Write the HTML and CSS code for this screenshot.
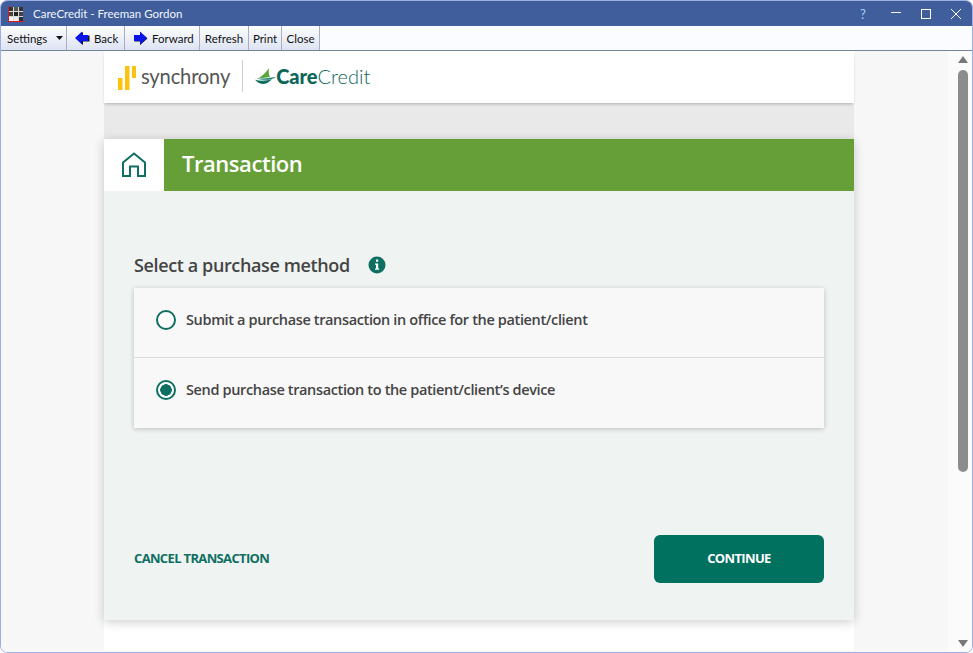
FILE: index.html
```html
<!DOCTYPE html>
<html lang="en">
<head>
<meta charset="utf-8">
<title>CareCredit - Freeman Gordon</title>
<link rel="stylesheet" href="styles.css">
</head>
<body>
<div class="window">
  <header class="titlebar">
    <svg class="app-icon" width="16" height="16" viewBox="0 0 16 16">
      <rect x="1" y="1" width="14" height="14" fill="#d8d8d8"/>
      <rect x="1" y="1" width="4" height="4" fill="#333"/><rect x="6" y="1" width="4" height="4" fill="#555"/><rect x="11" y="1" width="4" height="4" fill="#333"/>
      <rect x="1" y="6" width="4" height="4" fill="#444"/><rect x="6" y="6" width="4" height="4" fill="#222"/><rect x="11" y="6" width="4" height="4" fill="#444"/>
      <rect x="1" y="11" width="4" height="4" fill="#f4f4f4"/><rect x="6" y="11" width="4" height="4" fill="#eee"/><rect x="11" y="11" width="4" height="4" fill="#333"/>
      <path d="M0.5 0v15.5H16" fill="none" stroke="#e8141c" stroke-width="1"/>
    </svg>
    <span class="title-text">CareCredit - Freeman Gordon</span>
    <div class="win-controls">
      <span class="win-help">?</span>
      <svg class="win-btn" width="10" height="10" viewBox="0 0 10 10"><path d="M0 3.500h10" stroke="#fff" fill="none"/></svg>
      <svg class="win-btn" width="10" height="10" viewBox="0 0 10 10"><rect x=".5" y=".5" width="9" height="9" stroke="#fff" fill="none"/></svg>
      <svg class="win-btn" width="10" height="10" viewBox="0 0 10 10"><path d="M0 0l10 10M10 0L0 10" stroke="#fff" fill="none"/></svg>
    </div>
  </header>
  <nav class="toolbar">
    <div class="tool tool-settings">Settings<svg class="caret" width="7" height="4" viewBox="0 0 7 4"><path d="M0 0h7L3.500 4z" fill="#111"/></svg></div>
    <div class="tool tool-icon tool-back">
      <svg width="15" height="15" viewBox="0 0 15 15"><path d="M8 1v3.500h6.500v6H8V14L1 7.500z" fill="#111"/><path d="M7 0.500v3.500h6v6H7v3.500L0 7z" fill="#0a14e8"/></svg>
      Back
    </div>
    <div class="tool tool-icon tool-forward">
      <svg width="15" height="15" viewBox="0 0 15 15"><path d="M7 1v3.500H1.500v6H7V14l7.500-6.500z" fill="#111"/><path d="M7 0.500v3.500H1v6h6v3.500L14 7z" fill="#0a14e8"/></svg>
      Forward
    </div>
    <div class="tool tool-plain tool-refresh">Refresh</div>
    <div class="tool tool-plain tool-print">Print</div>
    <div class="tool tool-plain tool-close">Close</div>
  </nav>
  <div class="viewport">
    <main class="page">
      <div class="column">
        <div class="brand">
          <svg class="syf-mark" width="18" height="24" viewBox="0 0 18 24"><path d="M0 12h4.500v12H0zM7 0h4.500v24H7zM14 0h4v12h-4z" fill="#fdc20f"/></svg>
          <span class="syf-name">synchrony</span>
          <span class="brand-divider"></span>
          <svg class="cc-mark" width="21" height="16" viewBox="0 0 21 16">
            <path d="M14 0C12 3.500 8 7 4 10c4 0 8-.5 11-1C13.500 6.500 13.500 3 14 0z" fill="#5aa63a"/>
            <path d="M1 10.200c6 .8 13 0 20-1.200-4 3-12 4-20 1.200z" fill="#12806c"/>
            <path d="M0 11.800c6 1.500 12 1 17-.8-2.500 3-6 5-9.500 5C4.500 16 2 14 0 11.800z" fill="#0a6d5e"/>
          </svg>
          <span class="cc-name"><b>Care</b>Credit</span>
        </div>
        <div class="band"></div>
        <section class="card">
          <div class="card-head">
            <div class="home-tab">
              <svg width="26" height="26" viewBox="0 0 26 26"><path d="M2 24V10.500L13 1.500l11 9V24h-7V14.500H9V24z" fill="none" stroke="#0f6f62" stroke-width="2"/></svg>
            </div>
            <h1 class="card-title">Transaction</h1>
          </div>
          <div class="card-body">
            <div class="method-head">
              <h2 class="method-title">Select a purchase method</h2>
              <svg class="info" width="18" height="18" viewBox="0 0 18 18"><circle cx="9" cy="9" r="8.500" fill="#0f6f62"/><path d="M8 3.500h2.200v2.200H8zM7 7.500h3.200v5h1v1.300H7v-1.300h1V8.800H7z" fill="#fff"/></svg>
            </div>
            <div class="options">
              <label class="option">
                <span class="radio"></span>
                <span class="option-text">Submit a purchase transaction in office for the patient/client</span>
              </label>
              <label class="option option-next">
                <span class="radio radio-on"></span>
                <span class="option-text">Send purchase transaction to the patient/client’s device</span>
              </label>
            </div>
            <div class="actions">
              <a class="cancel">CANCEL TRANSACTION</a>
              <button class="continue">CONTINUE</button>
            </div>
          </div>
        </section>
      </div>
    </main>
    <aside class="scrollbar">
      <span class="arrow arrow-up"></span>
      <span class="thumb"></span>
      <span class="arrow arrow-down"></span>
    </aside>
  </div>
</div>
</body>
</html>
```
FILE: styles.css
```css
* { box-sizing: border-box; }
html, body { margin: 0; padding: 0; }
body { width: 973px; height: 653px; overflow: hidden; background: #fff; font-family: "Open Sans", sans-serif; }

.window {
  width: 973px; height: 653px;
  display: flex; flex-direction: column;
  border: 1px solid #9db0e6;
  border-radius: 7px;
  overflow: hidden;
  background: #fbfcff;
}

.titlebar {
  height: 25px; flex: none;
  display: flex; align-items: center;
  padding-left: 7px;
  background: #3f5e9b;
  color: #fff;
}
.app-icon { flex: none; }
.title-text { margin-left: 9px; font: 11.500px Lato, sans-serif; color: #f2f5fb; }
.win-controls { margin-left: auto; display: flex; align-items: center; padding-right: 11px; }
.win-help { font: 13px Lato, sans-serif; color: #a9d0f5; width: 12px; margin-right: 19px; }
.win-btn { margin-left: 20px; }
.win-help + .win-btn { margin-left: 0; }

.toolbar {
  height: 25px; flex: none;
  display: flex;
  background: #fbfcff;
  border-bottom: 1px solid #74869a;
}
.tool {
  display: flex; align-items: center;
  font: 11.500px Lato, sans-serif;
  color: #111;
  background: linear-gradient(#fdfdff, #dde3f2);
  border-right: 1px solid #a9afbd;
}
.tool-settings { padding-left: 6px; padding-right: 4px; width: 66px; }
.caret { margin-left: auto; margin-right: -1px; }
.tool-icon { gap: 4px; padding-left: 8px; }
.tool-back { width: 58px; }
.tool-forward { width: 75px; }
.tool-plain { justify-content: center; }
.tool-refresh { width: 49px; }
.tool-print { width: 33px; }
.tool-close { width: 38px; }

.viewport { flex: 1; display: flex; min-height: 0; }
.page { flex: 1; background: #f7f7f7; padding-left: 103px; min-width: 0; }
.column { width: 750px; height: 600px; background: #fff; display: flex; flex-direction: column; }

.brand {
  height: 52px; flex: none;
  display: flex; align-items: center;
  padding: 0 0 2px 14px;
  background: #fff;
  position: relative;
  box-shadow: 0 2px 3px -1px rgba(0,0,0,.25);
}
.syf-mark { flex: none; margin-top: 4px; }
.syf-name { margin-left: 5px; font: 400 20.200px Lato, sans-serif; color: #555; letter-spacing: -.2px; }
.brand-divider { width: 1px; height: 32px; background: #ccc; margin-left: 12px; }
.cc-mark { margin-left: 12px; flex: none; }
.cc-name { margin-left: 0; font: 300 20px Lato, sans-serif; color: #0b6658; }
.cc-name b { font-weight: 900; }

.band { height: 36px; flex: none; background: #e9e9e9; }

.card { height: 481px; flex: none; display: flex; flex-direction: column; background: #eff3f2; box-shadow: 0 2px 10px rgba(0,0,0,.2); position: relative; }
.card-head { height: 52px; flex: none; display: flex; }
.home-tab { width: 60px; background: #fff; display: flex; align-items: center; justify-content: center; padding-bottom: 1px; }
.card-title { flex: 1; margin: 0; padding-left: 18px; background: #669f38; color: #fff; font-size: 22px; font-weight: 600; letter-spacing: -.45px; line-height: 48px; }

.card-body { flex: 1; display: flex; flex-direction: column; padding: 60px 30px 37px; }
.method-head { display: flex; align-items: center; gap: 18px; height: 29px; margin-bottom: 8px; padding-bottom: 2px; }
.method-title { margin: 0; font-size: 18px; font-weight: 600; color: #444; letter-spacing: -.38px; }
.info { flex: none; }

.options { background: #f8f8f8; box-shadow: 0 1px 5px rgba(0,0,0,.22); }
.option { height: 69px; display: flex; align-items: center; gap: 10px; padding: 0 22px 5px; font-size: 14.500px; font-weight: 600; color: #444; letter-spacing: -.36px; }
.option-next { height: 71px; border-top: 1px solid #dcdcdc; padding-bottom: 6px; }
.option-text { padding-bottom: 2px; }
.radio { width: 20px; height: 20px; flex: none; border: 2px solid #0f6f62; border-radius: 50%; background: #fff; }
.radio-on { background: radial-gradient(circle, #0f6f62 0 5.500px, #fff 6px); }

.actions { margin-top: auto; display: flex; align-items: center; justify-content: space-between; }
.cancel { font-size: 13px; font-weight: 700; color: #0f6f62; letter-spacing: -.65px; padding-bottom: 2px; }
.continue { width: 170px; height: 48px; border: 0; border-radius: 6px; background: #00705f; color: #fff; padding: 0 0 2px; font: 700 13px "Open Sans", sans-serif; letter-spacing: -.65px; }

.scrollbar { width: 24px; flex: none; display: flex; flex-direction: column; align-items: center; padding: 5px 0 5px; background: #fbfbfb; }
.arrow { width: 0; height: 0; border-left: 5px solid transparent; border-right: 5px solid transparent; flex: none; transform: translateX(3px); }
.arrow-up { border-bottom: 7px solid #777; }
.arrow-down { margin-top: auto; border-top: 7px solid #777; }
.thumb { width: 10px; height: 402px; margin-top: 7px; border-radius: 5px; background: #8c8c8c; transform: translateX(3px); }
```
